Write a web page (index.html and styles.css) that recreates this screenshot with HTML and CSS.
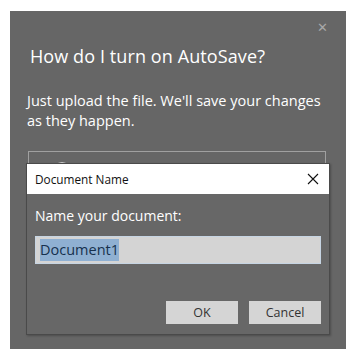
FILE: index.html
```html
<!DOCTYPE html>
<html lang="en">
<head>
  <meta charset="UTF-8">
  <title>AutoSave</title>
  <link rel="stylesheet" href="styles.css">
</head>
<body>
<div class="panel">
  <div class="panel-close">&#x2715;</div>
  <h1>How do I turn on AutoSave?</h1>
  <p>Just upload the file. We'll save your changes as they happen.</p>
  <div class="option">
    <span class="radio"></span>
    <span class="option-label">Save to OneDrive</span>
  </div>

  <div class="dialog">
    <div class="dialog-title">
      <span>Document Name</span>
      <svg class="dialog-x" width="12" height="12" viewBox="0 0 12 12"><path d="M1 1L11 11M11 1L1 11" stroke="#111" stroke-width="1.1" fill="none"/></svg>
    </div>
    <div class="dialog-body">
      <label class="field-label">Name your document:</label>
      <div class="field"><span class="selected">Document1</span></div>
      <div class="buttons">
        <button type="button">OK</button>
        <button type="button">Cancel</button>
      </div>
    </div>
  </div>
</div>
</body>
</html>
```

FILE: styles.css
```css
body {
  margin: 0;
  padding-top: 11px;
  background-color: #fff;
  font-family: 'Open Sans', 'Noto Sans', sans-serif;
}
.panel {
  position: relative;
  margin-left: 10px;
  width: 336px;
  height: 338px;
  background-color: #666;
  color: #fff;
  padding: 0 0 0 20px;
  box-sizing: border-box;
}
.panel-close {
  position: absolute;
  right: 18px;
  top: 7px;
  font-size: 13px;
  color: #a8a8a8;
}
h1 {
  margin: 0;
  padding-top: 33px;
  font-size: 18px;
  font-weight: 400;
  letter-spacing: 0.1px;
}
p {
  margin: 23px 0 0 -3px;
  font-size: 14.5px;
  line-height: 20px;
  width: 300px;
}
.option {
  margin: 20px 0 0 -2px;
  width: 298px;
  height: 50px;
  border: 1px solid #a0a0a0;
  display: flex;
  align-items: flex-start;
  padding: 8px 0 0 24px;
  box-sizing: border-box;
  gap: 12px;
  color: #bbb;
}
.radio {
  width: 14px;
  height: 14px;
  border: 2px solid #ccc;
  border-radius: 50%;
  margin-top: 2px;
}
.option-label {
  font-size: 15px;
}
.dialog {
  position: absolute;
  left: 16px;
  top: 152px;
  width: 304px;
  height: 172px;
  background-color: #676767;
  border: 1px solid #4a4a4a;
  box-shadow: 1px 1px 2px rgba(0, 0, 0, 0.25);
  box-sizing: border-box;
}
.dialog-title {
  height: 30px;
  background-color: #fff;
  color: #111;
  font-size: 11.8px;
  display: flex;
  align-items: center;
  justify-content: space-between;
  padding: 0 10px 0 8px;
}
.dialog-body {
  padding: 12px 8px 0 8px;
}
.field-label {
  display: block;
  font-size: 14px;
  color: #fff;
  line-height: 20px;
}
.field {
  margin-top: 10px;
  height: 28px;
  background-color: #d4d4d4;
  border: 1px solid #c6d4e2;
  box-sizing: border-box;
  display: flex;
  align-items: center;
  padding-left: 4px;
  font-size: 14.5px;
}
.selected {
  background-color: #8fb0d2;
  color: #16304e;
  line-height: 22px;
}
.buttons {
  display: flex;
  justify-content: flex-end;
  gap: 11px;
  margin-top: 37px;
}
button {
  width: 72px;
  height: 23px;
  border: none;
  background-color: #d5d5d5;
  color: #333;
  font-family: 'Open Sans', sans-serif;
  font-size: 12.5px;
  padding: 0;
}
```
